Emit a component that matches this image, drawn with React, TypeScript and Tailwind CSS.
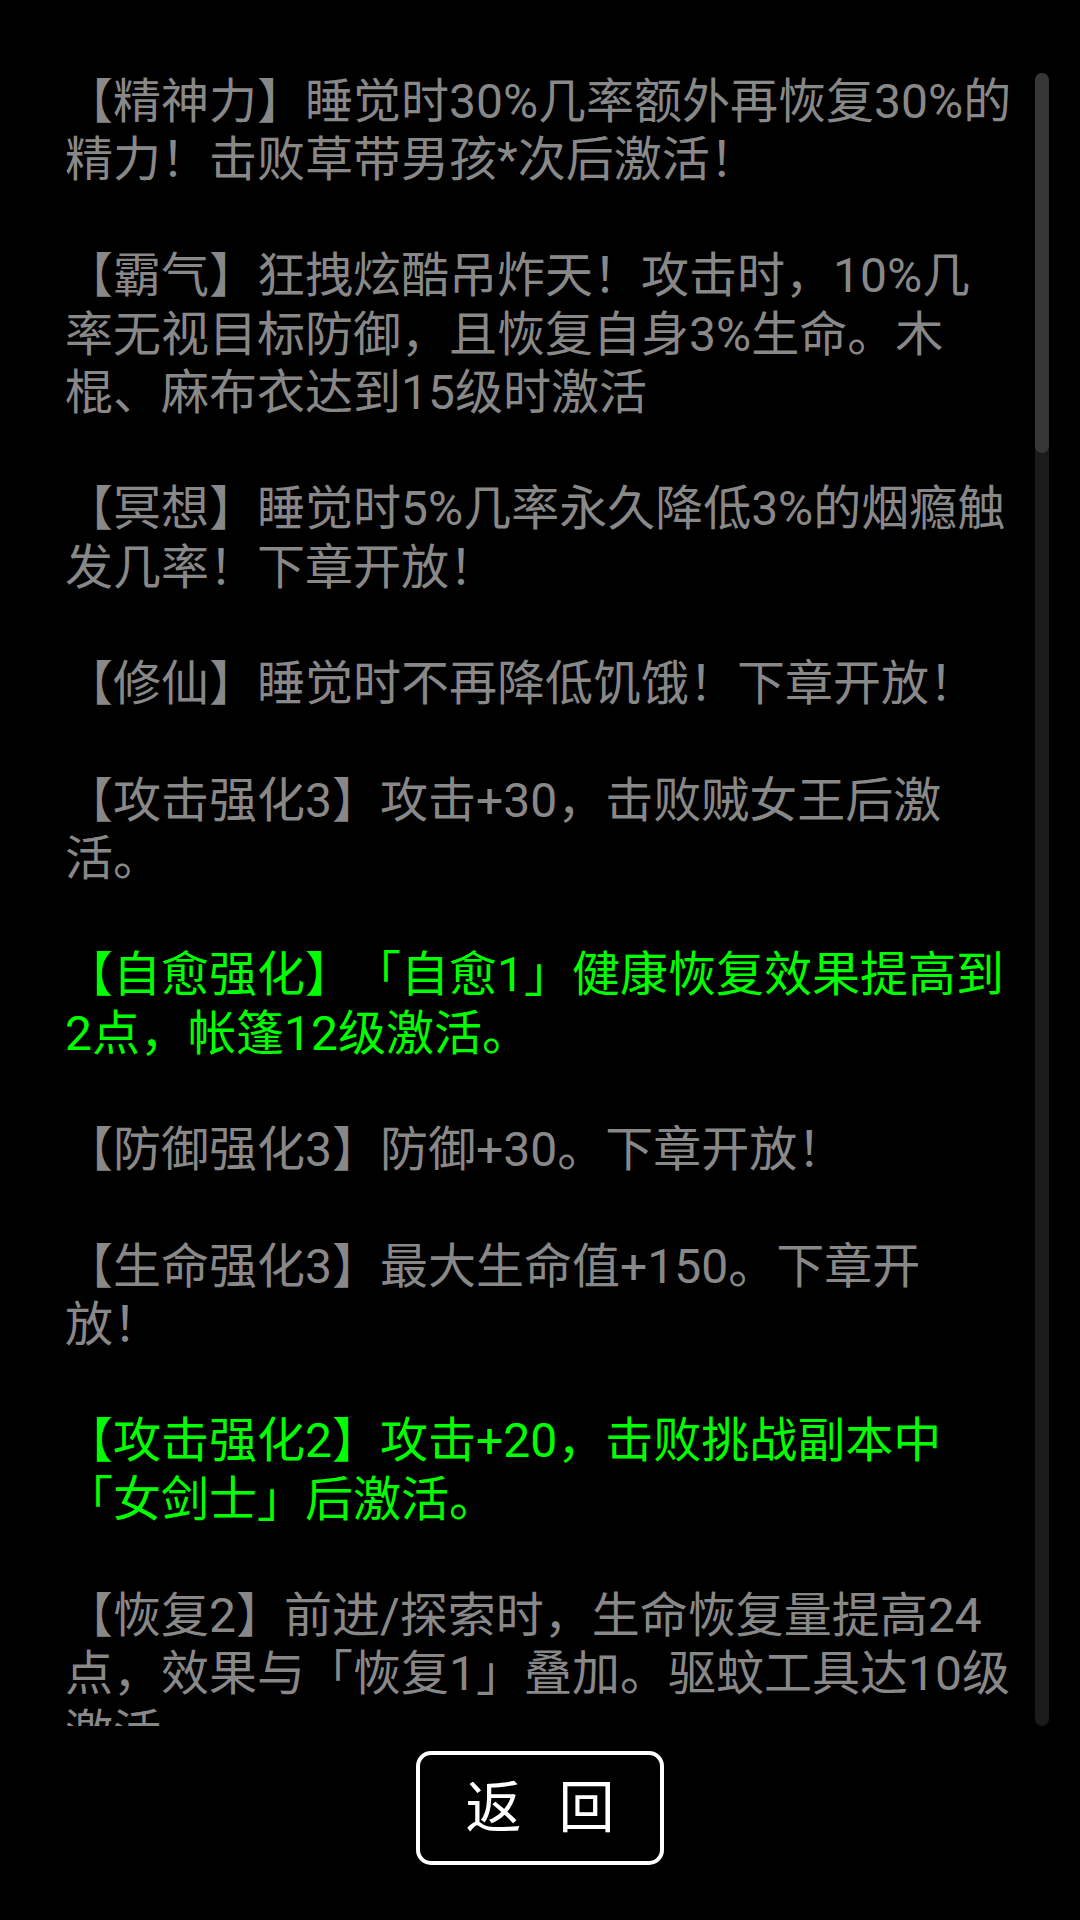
import React from 'react';

// 技能说明列表：每段按截图中的换行拆成多行
type Para = { lines: string[]; active?: boolean };

const PARAS: Para[] = [
  { lines: ['【精神力】睡觉时30%几率额外再恢复30%的', '精力！击败草带男孩*次后激活！'] },
  {
    lines: [
      '【霸气】狂拽炫酷吊炸天！攻击时，10%几',
      '率无视目标防御，且恢复自身3%生命。木',
      '棍、麻布衣达到15级时激活',
    ],
  },
  { lines: ['【冥想】睡觉时5%几率永久降低3%的烟瘾触', '发几率！下章开放！'] },
  { lines: ['【修仙】睡觉时不再降低饥饿！下章开放！'] },
  { lines: ['【攻击强化3】攻击+30，击败贼女王后激', '活。'] },
  { lines: ['【自愈强化】「自愈1」健康恢复效果提高到', '2点，帐篷12级激活。'], active: true },
  { lines: ['【防御强化3】防御+30。下章开放！'] },
  { lines: ['【生命强化3】最大生命值+150。下章开', '放！'] },
  { lines: ['【攻击强化2】攻击+20，击败挑战副本中', '「女剑士」后激活。'], active: true },
  {
    lines: [
      '【恢复2】前进/探索时，生命恢复量提高24',
      '点，效果与「恢复1」叠加。驱蚊工具达10级',
      '激活',
    ],
  },
];

function SkillList() {
  return (
    <div className="flex-1 overflow-hidden pl-[65px] [text-spacing-trim:space-all]">
      {PARAS.map((p, i) => (
        <div
          key={i}
          className={`mb-[58.25px] ${p.active ? 'text-[#00ff00]' : 'text-[#888888]'}`}
        >
          {p.lines.map((l, j) => (
            <div key={j} className="whitespace-nowrap">
              {l}
            </div>
          ))}
        </div>
      ))}
    </div>
  );
}

function ScrollBar() {
  return (
    <div className="mr-[31px] w-[14px] shrink-0 rounded-full bg-[#1b1b1b]">
      <div className="h-[380px] rounded-full bg-[#363636]" />
    </div>
  );
}

export default function App() {
  return (
    <div
      className="flex h-[1920px] w-[1080px] flex-col bg-black"
      style={{ fontFamily: 'Roboto, "Noto Sans CJK SC", sans-serif' }}
    >
      <div className="mt-[72.5px] flex h-[1653px] text-[48px] leading-[58.25px]">
        <SkillList />
        <ScrollBar />
      </div>

      <div className="mt-[25px] flex justify-center">
        <button className="flex h-[114px] w-[248px] items-center justify-center gap-[37px] rounded-[15px] border-4 border-white bg-black text-[56px] leading-none text-white">
          <span>返</span>
          <span>回</span>
        </button>
      </div>
    </div>
  );
}
